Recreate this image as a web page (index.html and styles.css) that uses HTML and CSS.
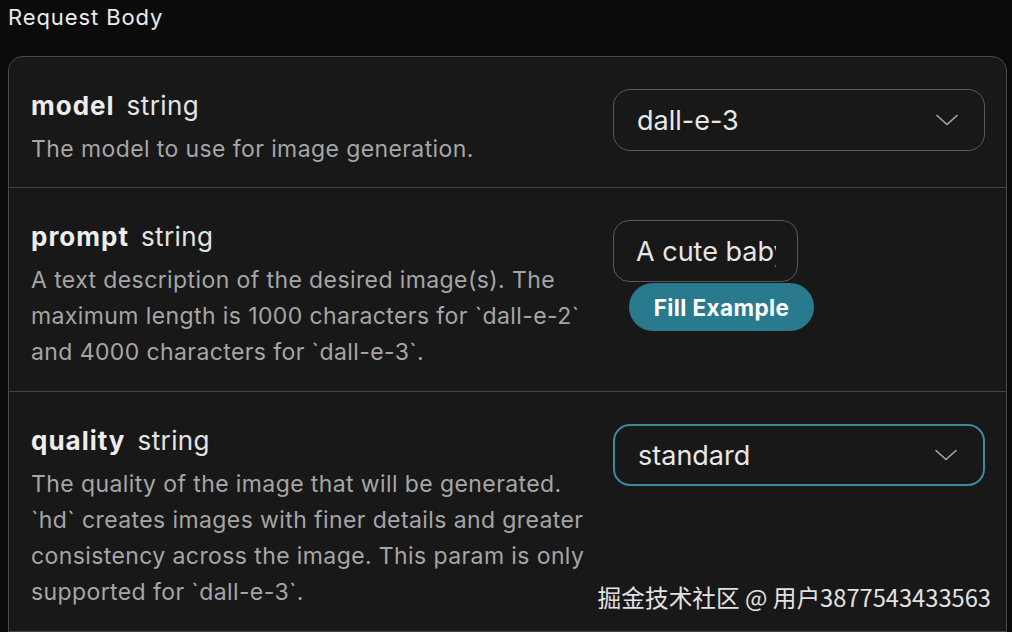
FILE: index.html
```html
<!DOCTYPE html>
<html lang="en">
<head>
<meta charset="utf-8">
<title>Request Body</title>
<link rel="stylesheet" href="styles.css">
</head>
<body>
<div class="page">
  <h2 class="section-title">Request Body</h2>
  <div class="card">
    <div class="param">
      <div class="param-info">
        <div class="param-head"><span class="param-name">model</span><span class="param-type">string</span></div>
        <p class="param-desc">The model to use for image generation.</p>
      </div>
      <div class="param-control">
        <div class="select">
          <span class="select-value">dall-e-3</span>
          <svg class="chevron" viewBox="0 0 22 12" width="22" height="12"><path d="M1 1.5 L11 10.5 L21 1.5" fill="none" stroke="#a8a8a8" stroke-width="1.6" stroke-linecap="round" stroke-linejoin="round"/></svg>
        </div>
      </div>
    </div>
    <div class="param">
      <div class="param-info">
        <div class="param-head"><span class="param-name">prompt</span><span class="param-type">string</span></div>
        <p class="param-desc">A text description of the desired image(s). The maximum length is 1000 characters for `dall-e-2` and 4000 characters for `dall-e-3`.</p>
      </div>
      <div class="param-control">
        <div class="text-input"><span class="input-value">A cute baby sea otter</span></div>
        <button class="fill-btn">Fill Example</button>
      </div>
    </div>
    <div class="param">
      <div class="param-info">
        <div class="param-head"><span class="param-name">quality</span><span class="param-type">string</span></div>
        <p class="param-desc">The quality of the image that will be generated. `hd` creates images with finer details and greater consistency across the image. This param is only supported for `dall-e-3`.</p>
      </div>
      <div class="param-control">
        <div class="select select-focus">
          <span class="select-value">standard</span>
          <svg class="chevron" viewBox="0 0 22 12" width="22" height="12"><path d="M1 1.5 L11 10.5 L21 1.5" fill="none" stroke="#a8a8a8" stroke-width="1.6" stroke-linecap="round" stroke-linejoin="round"/></svg>
        </div>
      </div>
    </div>
    <div class="param param-empty"></div>
  </div>
  <div class="watermark">掘金技术社区 @ 用户3877543433563</div>
</div>
</body>
</html>
```

FILE: styles.css
```css
* { box-sizing: border-box; }
html, body {
  margin: 0;
  padding: 0;
  background: #0b0b0b;
  height: 632px;
  overflow: hidden;
}
body {
  font-family: Inter, "Noto Sans", "Noto Sans CJK SC", sans-serif;
  color: #e6e6e6;
}
.page {
  position: relative;
  height: 632px;
  padding: 0 5px 0 8px;
}
.section-title {
  margin: 0;
  padding-top: 3px;
  font-size: 22px;
  line-height: 28px;
  font-weight: 400;
  color: #ececec;
  letter-spacing: 0.9px;
}
.card {
  margin-top: 25px;
  background: #181818;
  border: 1px solid #4a4a4a;
  border-radius: 15px;
  overflow: hidden;
}
.param {
  display: flex;
  gap: 22px;
  padding: 31px 21px 21px 22px;
  border-bottom: 1px solid #444444;
}
.param:first-child {
  padding-bottom: 20px;
}
.param-empty {
  height: 120px;
  border-bottom: none;
}
.param-info {
  flex: 1;
  min-width: 0;
}
.param-head {
  display: flex;
  align-items: baseline;
  gap: 12px;
  font-size: 26px;
  line-height: 36px;
}
.param-name {
  font-weight: 700;
  color: #ededed;
  letter-spacing: 1px;
}
.param-type {
  font-weight: 400;
  color: #e4e4e4;
  letter-spacing: 0.4px;
}
.param-desc {
  margin: 7px 0 0;
  font-size: 23px;
  line-height: 36px;
  color: #a6a6a6;
  letter-spacing: 0.4px;
}
.param-control {
  width: 372px;
  flex: none;
  display: flex;
  flex-direction: column;
  align-items: flex-start;
  padding-top: 1px;
}
.select {
  width: 372px;
  height: 62px;
  border: 1.5px solid #595959;
  border-radius: 17px;
  display: flex;
  align-items: center;
  justify-content: space-between;
  padding: 0 26px 0 23px;
}
.select-focus {
  border: 2px solid #3a8aa0;
}
.select-value {
  font-size: 27px;
  color: #e8e8e8;
}
.chevron {
  display: block;
}
.text-input {
  width: 185px;
  height: 62px;
  border: 1.5px solid #595959;
  border-radius: 16px;
  display: flex;
  align-items: center;
  padding: 0 0 0 22px;
  overflow: hidden;
  white-space: nowrap;
}
.input-value {
  font-size: 27px;
  color: #e6e6e6;
  overflow: hidden;
  width: 140px;
}
.fill-btn {
  margin: 1px 0 0 16px;
  width: 185px;
  height: 48px;
  border: none;
  border-radius: 24px;
  background: #2a7a8e;
  color: #ffffff;
  font-family: Inter, "Noto Sans", sans-serif;
  font-size: 22.5px;
  font-weight: 700;
  letter-spacing: 0.4px;
  padding: 0;
}
.watermark {
  position: absolute;
  right: 21px;
  top: 581px;
  font-family: "Noto Sans CJK SC", "Noto Sans", sans-serif;
  font-size: 23.7px;
  line-height: 32px;
  color: #e2e2e2;
}
```
